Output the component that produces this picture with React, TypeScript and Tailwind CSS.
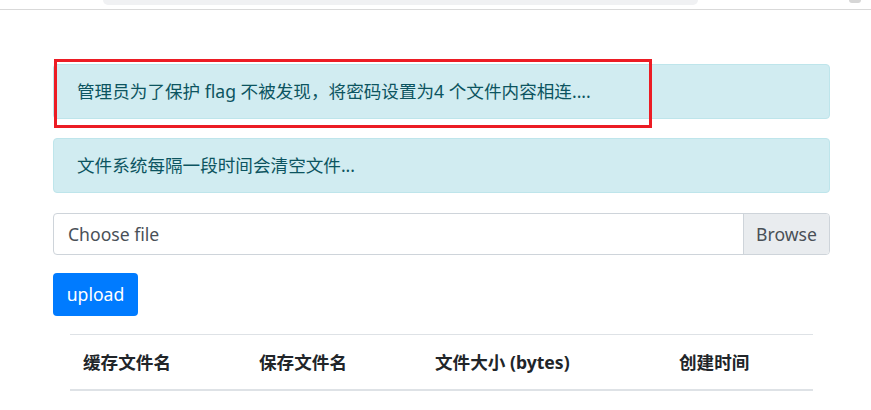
import React from 'react'

const font = { fontFamily: '"Segoe UI", "Noto Sans", "Noto Sans CJK SC", sans-serif' }

const Alert = ({ children }: { children: React.ReactNode }) => (
    <div className="h-[55px] flex items-center px-[23px] border border-[#bee5eb] bg-[#d1ecf1] text-[#0c5460] rounded-[4px] text-[17.6px]">
        {children}
    </div>
)

export default function App() {
    const headers = [
        { label: '缓存文件名', w: 'w-[176px]' },
        { label: '保存文件名', w: 'w-[176px]' },
        { label: '文件大小 (bytes)', w: 'w-[244px]' },
        { label: '创建时间', w: 'flex-1' },
    ]

    return (
        <div className="w-[871px] h-[410px] bg-white overflow-hidden text-[#212529]" style={font}>
            <div className="h-[10px] border-b border-[#d9d9d9] flex">
                <div className="ml-[103px] w-[595px] h-[5px] bg-[#f0f1f3] rounded-b-[10px]" />
                <div className="ml-auto mr-[10px] w-[12px] h-[3px] bg-[#d6d6d6] rounded-b-full" />
            </div>

            <div className="ml-[53px] w-[777px] pt-[54px]">
                <div className="relative">
                    <Alert>管理员为了保护 flag 不被发现，将密码设置为4 个文件内容相连....</Alert>
                    <div className="absolute left-[1px] top-[-5px] w-[598px] h-[69px] border-[3px] border-[#ec1c24]" />
                </div>
                <div className="mt-[19px]">
                    <Alert>文件系统每隔一段时间会清空文件...</Alert>
                </div>

                <div className="mt-[20px] h-[42px] flex border border-[#ced4da] rounded-[4px] text-[17.6px] text-[#495057] overflow-hidden">
                    <div className="flex-1 flex items-center pl-[14px]">Choose file</div>
                    <div className="w-[86px] flex items-center justify-center bg-[#e9ecef] border-l border-[#ced4da]">Browse</div>
                </div>

                <button className="mt-[18px] w-[85px] h-[43px] bg-[#007bff] text-white rounded-[4px] text-[17.6px]">upload</button>

                <div className="mt-[18px] ml-[17px] w-[743px] border-t border-[#dee2e6] border-b-2 border-b-[#dee2e6] h-[57px] flex items-center font-bold text-[17.6px]">
                    {headers.map((h) => (
                        <div key={h.label} className={`${h.w} pl-[13px]`}>{h.label}</div>
                    ))}
                </div>
            </div>
        </div>
    )
}
